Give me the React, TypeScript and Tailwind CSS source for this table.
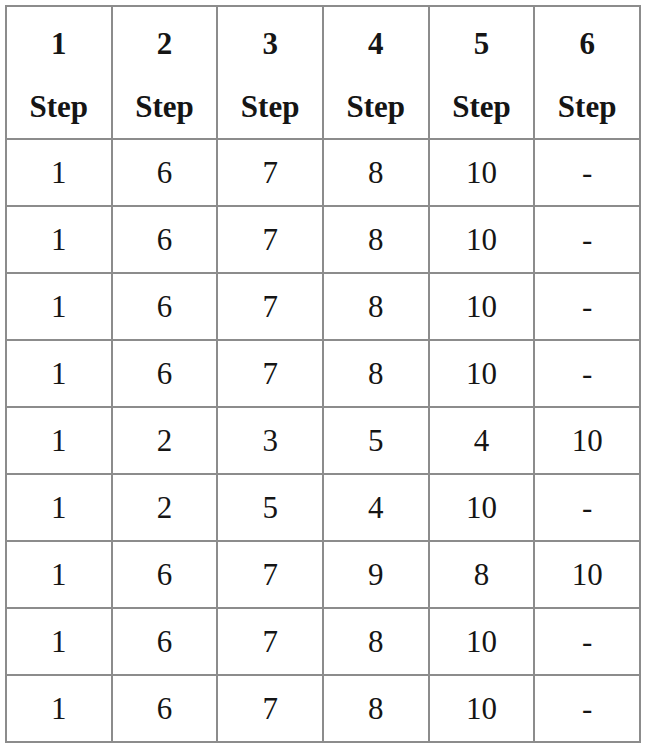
import React from "react";

const rows: string[][] = [
  ["1", "6", "7", "8", "10", "-"],
  ["1", "6", "7", "8", "10", "-"],
  ["1", "6", "7", "8", "10", "-"],
  ["1", "6", "7", "8", "10", "-"],
  ["1", "2", "3", "5", "4", "10"],
  ["1", "2", "5", "4", "10", "-"],
  ["1", "6", "7", "9", "8", "10"],
  ["1", "6", "7", "8", "10", "-"],
  ["1", "6", "7", "8", "10", "-"],
];

export default function App() {
  return (
    <div className="w-[650px] h-[749px] bg-white pt-[5px] pl-[5px]">
      <div
        className="w-[636px] p-[2px] bg-[#8c8c8c] grid grid-cols-6 gap-[2px] text-[#151515] text-[31px]"
        style={{ fontFamily: '"Liberation Serif", "Times New Roman", serif' }}
      >
        {[1, 2, 3, 4, 5, 6].map((n) => (
          <div
            key={n}
            className="bg-white h-[131px] pt-[5px] flex flex-col items-center font-bold leading-[63px]"
          >
            <span>{n}</span>
            <span>Step</span>
          </div>
        ))}
        {rows.map((r, i) =>
          r.map((c, j) => (
            <div
              key={`${i}-${j}`}
              className="bg-white h-[65px] flex items-center justify-center leading-none"
            >
              {c}
            </div>
          ))
        )}
      </div>
    </div>
  );
}
